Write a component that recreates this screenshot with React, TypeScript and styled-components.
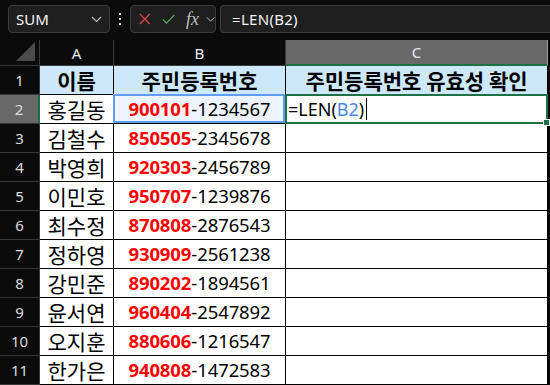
import styled, { createGlobalStyle, css } from "styled-components";

const GlobalStyle = createGlobalStyle`
  html, body {
    margin: 0;
    padding: 0;
    background: #0b0b0b;
    overflow: hidden;
  }
`;

const ROWS: [string, string, string][] = [
  ["홍길동", "900101", "1234567"],
  ["김철수", "850505", "2345678"],
  ["박영희", "920303", "2456789"],
  ["이민호", "950707", "1239876"],
  ["최수정", "870808", "2876543"],
  ["정하영", "930909", "2561238"],
  ["강민준", "890202", "1894561"],
  ["윤서연", "960404", "2547892"],
  ["오지훈", "880606", "1216547"],
  ["한가은", "940808", "1472583"],
];

const Page = styled.div`
  width: 550px;
  height: 385px;
  background: #0b0b0b;
  font-family: "Noto Sans", "Noto Sans CJK KR", sans-serif;
  overflow: hidden;
`;

const Toolbar = styled.div`
  height: 40px;
  display: flex;
  align-items: flex-start;
  padding: 5px 0 0 8px;
  box-sizing: border-box;
`;

const Box = styled.div`
  height: 28px;
  box-sizing: border-box;
  border: 1px solid #3d3d3d;
  border-radius: 4px;
  background: #1f1f1f;
  display: flex;
  align-items: center;
`;

const NameBox = styled(Box)`
  width: 102px;
  padding: 0 7px 0 7px;
  justify-content: space-between;
  color: #f2f2f2;
  font-size: 15px;
`;

const Dots = styled.div`
  width: 20px;
  height: 28px;
  display: flex;
  flex-direction: column;
  align-items: center;
  justify-content: center;
  gap: 3px;
  span {
    width: 2px;
    height: 2px;
    background: #d8d8d8;
  }
`;

const IconBox = styled(Box)`
  width: 86px;
  padding: 0 0 0 8px;
  gap: 7px;
`;

const Fx = styled.span`
  font-family: "Liberation Serif", serif;
  font-style: italic;
  font-size: 18px;
  color: #bdbdbd;
  margin-left: 4px;
  line-height: 1;
`;

const FormulaBar = styled(Box)`
  flex: 1;
  margin-left: 4px;
  padding-left: 11px;
  border-right: none;
  border-radius: 4px 0 0 4px;
  color: #f2f2f2;
  font-size: 15px;
  letter-spacing: 0.3px;
`;

const Sheet = styled.div`
  display: grid;
  grid-template-columns: 40px 74px 172px 262px;
  grid-template-rows: 26px repeat(11, 29px);
`;

const Corner = styled.div`
  background: #0b0b0b;
  border-right: 1px solid #3a3a3a;
  border-bottom: 1px solid #3a3a3a;
  display: flex;
  align-items: flex-end;
  justify-content: flex-end;
  padding: 0 4px 4px 0;
`;

const ColHeader = styled.div<{ $selected?: boolean }>`
  box-sizing: border-box;
  display: flex;
  align-items: center;
  justify-content: center;
  font-size: 15px;
  color: #e4ecf4;
  background: ${(p) => (p.$selected ? "#686868" : "#0b0b0b")};
  border-right: 1px solid ${(p) => (p.$selected ? "#9a9a9a" : "#3a3a3a")};
  border-bottom: ${(p) => (p.$selected ? "2px solid #1e7145" : "1px solid #3a3a3a")};
`;

const RowHeader = styled.div<{ $selected?: boolean }>`
  box-sizing: border-box;
  display: flex;
  align-items: center;
  justify-content: center;
  font-size: 15px;
  color: #dcdcdc;
  background: ${(p) => (p.$selected ? "#686868" : "#0b0b0b")};
  border-bottom: 1px solid #363636;
  border-right: ${(p) => (p.$selected ? "2px solid #1e7145" : "1px solid #3a3a3a")};
`;

const Cell = styled.div<{ $head?: boolean; $ref?: boolean; $active?: boolean; $align?: "center" | "left" }>`
  position: relative;
  box-sizing: border-box;
  display: flex;
  align-items: center;
  justify-content: ${(p) => (p.$align === "left" ? "flex-start" : "center")};
  background: ${(p) => (p.$head ? "#cde9f9" : p.$ref ? "#edf4fd" : "#ffffff")};
  border-right: 1px solid #000;
  border-bottom: 1px solid #000;
  color: #000;
  font-family: "Noto Sans CJK KR", "Noto Sans", sans-serif;
  font-size: 21px;
  line-height: 1;
  font-weight: ${(p) => (p.$head ? 700 : 400)};
  white-space: nowrap;
  ${(p) =>
    p.$ref &&
    css`
      &::after {
        content: "";
        position: absolute;
        left: -1px;
        top: -1px;
        right: 0;
        bottom: 0;
        border: 2px solid #5f9cf2;
      }
    `}
  ${(p) =>
    p.$active &&
    css`
      padding-left: 2px;
      &::after {
        content: "";
        position: absolute;
        left: -1px;
        top: -1px;
        right: -1px;
        bottom: -1px;
        border: 2px solid #1e7145;
      }
      &::before {
        content: "";
        position: absolute;
        right: -3px;
        bottom: -3px;
        width: 5px;
        height: 5px;
        background: #1e7145;
        border: 1px solid #fff;
        z-index: 1;
      }
    `}
`;

const Num = styled.span`
  font-family: "Noto Sans", sans-serif;
  font-size: 18.5px;
  letter-spacing: -0.1px;
`;

const Birth = styled.b`
  color: #ff0000;
  font-weight: 700;
`;

const Formula = styled.span`
  font-family: "Noto Sans", sans-serif;
  font-size: 18px;
  display: flex;
  align-items: center;
  i {
    font-style: normal;
    color: #4a86e8;
  }
`;

const Caret = styled.span`
  width: 1px;
  height: 22px;
  background: #000;
  margin-left: 2px;
`;

const Chevron = () => (
  <svg width="11" height="7" viewBox="0 0 11 7">
    <path d="M1 1l4.5 4.5L10 1" fill="none" stroke="#bdbdbd" strokeWidth="1.2" />
  </svg>
);

export default function App() {
  return (
    <Page>
      <GlobalStyle />
      <Toolbar>
        <NameBox>
          <span>SUM</span>
          <Chevron />
        </NameBox>
        <Dots>
          <span />
          <span />
          <span />
        </Dots>
        <IconBox>
          <svg width="14" height="14" viewBox="0 0 14 14">
            <path d="M1 1l12 12M13 1L1 13" stroke="#e0444c" strokeWidth="1.4" />
          </svg>
          <svg width="16" height="14" viewBox="0 0 16 14" style={{ marginLeft: 4 }}>
            <path d="M1 7.5l4.5 4.5L15 2" fill="none" stroke="#4fb35e" strokeWidth="1.4" />
          </svg>
          <Fx>fx</Fx>
          <Chevron />
        </IconBox>
        <FormulaBar>=LEN(B2)</FormulaBar>
      </Toolbar>
      <Sheet>
        <Corner>
          <svg width="19" height="19" viewBox="0 0 19 19">
            <path d="M19 0V19H0Z" fill="#4b4b4b" />
          </svg>
        </Corner>
        <ColHeader>A</ColHeader>
        <ColHeader>B</ColHeader>
        <ColHeader $selected>C</ColHeader>

        <RowHeader>1</RowHeader>
        <Cell $head>이름</Cell>
        <Cell $head>주민등록번호</Cell>
        <Cell $head>주민등록번호 유효성 확인</Cell>

        {ROWS.map(([name, birth, rest], i) => (
          <Row key={name} n={i + 2} name={name} birth={birth} rest={rest} />
        ))}
      </Sheet>
    </Page>
  );
}

function Row({ n, name, birth, rest }: { n: number; name: string; birth: string; rest: string }) {
  const first = n === 2;
  return (
    <>
      <RowHeader $selected={first}>{n}</RowHeader>
      <Cell>{name}</Cell>
      <Cell $ref={first}>
        <Num>
          <Birth>{birth}</Birth>-{rest}
        </Num>
      </Cell>
      {first ? (
        <Cell $active $align="left">
          <Formula>
            =LEN(<i>B2</i>)
          </Formula>
          <Caret />
        </Cell>
      ) : (
        <Cell />
      )}
    </>
  );
}
